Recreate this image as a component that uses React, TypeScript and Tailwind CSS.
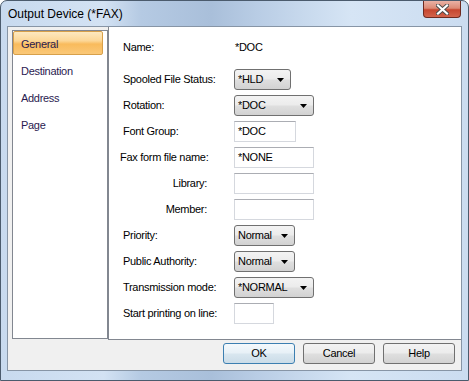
import React from 'react';

const DropArrow = () => (
  <svg width="7" height="4" viewBox="0 0 7 4" className="shrink-0">
    <path d="M0 0h7L3.5 4z" fill="#000" />
  </svg>
);

function Combo({ value, w }: { value: string; w: string }) {
  return (
    <div
      className={`${w} h-[21px] flex items-center justify-between pl-[3px] pr-[6px] rounded-[3px] border border-[#707070] bg-[linear-gradient(#f3f3f3,#ececec_45%,#dedede_55%,#d2d2d2)]`}
    >
      <span>{value}</span>
      <DropArrow />
    </div>
  );
}

function TextBox({ value, w }: { value?: string; w: string }) {
  return (
    <div
      className={`${w} h-[21px] flex items-center pl-[3px] bg-white border border-[#d5d8de] border-t-[#abadb3]`}
    >
      {value}
    </div>
  );
}

function Row({
  label,
  children,
  right,
  shift,
}: {
  label: string;
  children: React.ReactNode;
  right?: boolean;
  shift?: boolean;
}) {
  return (
    <div className="flex h-[21px] items-center">
      <div
        className={
          right
            ? 'w-[111px] text-right pr-[27px]'
            : shift
            ? 'w-[114px] -ml-[3px]'
            : 'w-[111px]'
        }
      >
        {label}
      </div>
      {children}
    </div>
  );
}

const tabs = ['General', 'Destination', 'Address', 'Page'];

export default function App() {
  return (
    <div className="w-[469px] h-[381px] relative overflow-hidden rounded-t-[7px] border border-[#4b5b6d] bg-[linear-gradient(90deg,#c8daef,#d3e2f3_22%,#b5cae3_30%,#a9bfda_45%,#b9cde5_55%,#d6e5f5_75%,#cbdcf0)] font-['Liberation_Sans',Arial,sans-serif] text-[11px] tracking-[-0.3px] text-black">
      {/* Title bar */}
      <div className="h-[25px] flex items-center pl-[7px] pt-[1px] text-[12px] tracking-normal text-black">
        Output Device (*FAX)
      </div>
      <div className="absolute top-0 right-[7px] w-[38px] h-[17px] rounded-b-[4px] border border-t-0 border-[#6e2a20] bg-[linear-gradient(#eab2a5,#dc8a76_45%,#c6462f_55%,#d3634b)] flex items-center justify-center">
        <svg width="13" height="11" viewBox="0 0 13 11">
          <path d="M2 1.5l9 8M11 1.5l-9 8" stroke="#4a4a4a" strokeWidth="4" strokeLinecap="square" />
          <path d="M2 1.5l9 8M11 1.5l-9 8" stroke="#fff" strokeWidth="2.2" strokeLinecap="square" />
        </svg>
      </div>

      {/* Client area */}
      <div className="ml-[6px] w-[455px] h-[345px] flex flex-col border border-[#8795a6] bg-[#f0f0f0]">
        <div className="h-[313px] flex">
          {/* Left list */}
          <div className="w-[100px] pl-[4px] pt-[3px]">
            <div className="w-[96px] h-[309px] border border-[#828790] bg-white flex flex-col gap-[3px] text-[#2a1a50]">
              {tabs.map((t, i) => (
                <div
                  key={t}
                  className={
                    i === 0
                      ? 'w-[90px] h-[24px] flex items-center px-[7px] pt-[2px] rounded-[2px] border border-[#d7a04a] bg-[linear-gradient(#fde9c0,#fcd797_40%,#f9bb5c_55%,#fac878)]'
                      : 'w-[90px] h-[24px] flex items-center px-[7px] pt-[2px] border border-transparent'
                  }
                >
                  {t}
                </div>
              ))}
            </div>
          </div>

          {/* Right panel */}
          <div className="flex-1 bg-white border-l border-b border-[#828790] pl-[14px] pt-[10px] flex flex-col gap-[5px]">
            <div className="mb-[6px]">
              <Row label="Name:">
                <span className="pl-[1px]">*DOC</span>
              </Row>
            </div>
            <Row label="Spooled File Status:">
              <Combo value="*HLD" w="w-[57px]" />
            </Row>
            <Row label="Rotation:">
              <Combo value="*DOC" w="w-[80px]" />
            </Row>
            <Row label="Font Group:">
              <TextBox value="*DOC" w="w-[62px]" />
            </Row>
            <Row label="Fax form file name:" shift>
              <TextBox value="*NONE" w="w-[80px]" />
            </Row>
            <Row label="Library:" right>
              <TextBox w="w-[80px]" />
            </Row>
            <Row label="Member:" right>
              <TextBox w="w-[80px]" />
            </Row>
            <Row label="Priority:">
              <Combo value="Normal" w="w-[61px]" />
            </Row>
            <Row label="Public Authority:">
              <Combo value="Normal" w="w-[61px]" />
            </Row>
            <Row label="Transmission mode:">
              <Combo value="*NORMAL" w="w-[80px]" />
            </Row>
            <Row label="Start printing on line:">
              <TextBox w="w-[40px]" />
            </Row>
          </div>
        </div>

        {/* Buttons */}
        <div className="flex-1 flex justify-end items-start gap-[8px] pt-[3px] pr-[6px]">
          <button className="w-[72px] h-[21px] rounded-[3px] border border-[#3c7fb1] bg-[linear-gradient(#f4f9fc,#e8f1f7_45%,#d8e6ef_55%,#cbdce8)] text-[11px]">
            OK
          </button>
          <button className="w-[72px] h-[21px] rounded-[3px] border border-[#707070] bg-[linear-gradient(#f3f3f3,#ececec_45%,#dedede_55%,#d2d2d2)] text-[11px]">
            Cancel
          </button>
          <button className="w-[72px] h-[21px] rounded-[3px] border border-[#707070] bg-[linear-gradient(#f3f3f3,#ececec_45%,#dedede_55%,#d2d2d2)] text-[11px]">
            Help
          </button>
        </div>
      </div>
    </div>
  );
}
